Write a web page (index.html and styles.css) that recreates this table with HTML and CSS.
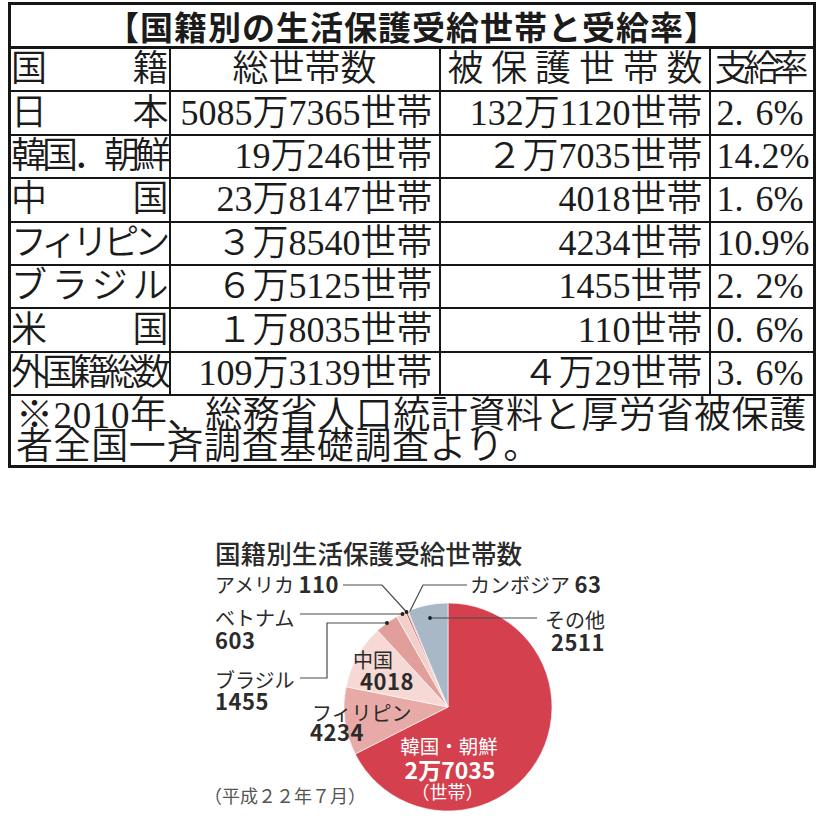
FILE: index.html
```html
<!DOCTYPE html>
<html lang="ja">
<head>
<meta charset="utf-8">
<link rel="stylesheet" href="styles.css">
</head>
<body>
<table class="stats">
  <colgroup><col class="c1"><col class="c2"><col class="c3"><col class="c4"></colgroup>
  <tr><th colspan="4" class="title">【国籍別の生活保護受給世帯と受給率】</th></tr>
  <tr class="head">
    <th class="name pair">国籍</th>
    <th class="center">総世帯数</th>
    <th class="spread">被保護世帯数</th>
    <th class="rate-h">支給率</th>
  </tr>
  <tr><td class="name pair">日本</td><td class="num">5085万7365世帯</td><td class="num">132万1120世帯</td><td class="rate">2. 6%</td></tr>
  <tr><td class="name squeeze">韓国．朝鮮</td><td class="num">19万246世帯</td><td class="num">２万7035世帯</td><td class="rate">14.2%</td></tr>
  <tr><td class="name pair">中国</td><td class="num">23万8147世帯</td><td class="num">4018世帯</td><td class="rate">1. 6%</td></tr>
  <tr><td class="name squeeze">フィリピン</td><td class="num">３万8540世帯</td><td class="num">4234世帯</td><td class="rate">10.9%</td></tr>
  <tr><td class="name pair">ブラジル</td><td class="num">６万5125世帯</td><td class="num">1455世帯</td><td class="rate">2. 2%</td></tr>
  <tr><td class="name pair">米国</td><td class="num">１万8035世帯</td><td class="num">110世帯</td><td class="rate">0. 6%</td></tr>
  <tr><td class="name squeeze">外国籍総数</td><td class="num">109万3139世帯</td><td class="num">４万29世帯</td><td class="rate">3. 6%</td></tr>
  <tr><td colspan="4" class="note">※2010年、総務省人口統計資料と厚労省被保護<br>者全国一斉調査基礎調査より。</td></tr>
</table>

<div class="chart">
  <svg class="pie" width="440" height="300" viewBox="0 0 440 300" xmlns="http://www.w3.org/2000/svg">
    <text class="ct-title" x="25" y="41">国籍別生活保護受給世帯数</text>

    <g class="slices">
      <path class="s-korea" d="M258,184 L258,80 A104,104 0 1 1 165.21,230.99 Z"/>
      <path class="s-phil" d="M258,184 L165.21,230.99 A104,104 0 0 1 155.99,163.76 Z"/>
      <path class="s-china" d="M258,184 L155.99,163.76 A104,104 0 0 1 187.54,107.51 Z"/>
      <path class="s-brazil" d="M258,184 L187.54,107.51 A104,104 0 0 1 206.69,93.54 Z"/>
      <path class="s-viet" d="M258,184 L206.69,93.54 A104,104 0 0 1 215.47,89.09 Z"/>
      <path class="s-usa" d="M258,184 L215.47,89.09 A104,104 0 0 1 217.11,88.38 Z"/>
      <path class="s-camb" d="M258,184 L217.11,88.38 A104,104 0 0 1 218.07,87.97 Z"/>
      <path class="s-other" d="M258,184 L218.07,87.97 A104,104 0 0 1 258,80 Z"/>
    </g>

    <g class="leaders">
      <polyline points="153,62 192,62 216.5,89"/>
      <polyline points="220,88 233,62 277,62"/>
      <polyline points="110,91 212.5,91"/>
      <polyline points="110,155 137,155 137,100 197,100"/>
      <polyline points="240,95 347,95"/>
    </g>
    <g class="dots">
      <circle cx="216.5" cy="89" r="1.9"/>
      <circle cx="212.5" cy="91" r="1.9"/>
      <circle cx="197" cy="100" r="1.9"/>
      <circle cx="240" cy="95" r="1.9"/>
    </g>

    <text class="lbl" x="25" y="70">アメリカ <tspan class="num-b">110</tspan></text>
    <text class="lbl" x="280" y="70">カンボジア <tspan class="num-b">63</tspan></text>
    <text class="lbl" x="25" y="103">ベトナム</text>
    <text class="num-b" x="25" y="126">603</text>
    <text class="lbl" x="25" y="165">ブラジル</text>
    <text class="num-b" x="25" y="187">1455</text>
    <text class="lbl" x="163" y="145">中国</text>
    <text class="num-b" x="170" y="167">4018</text>
    <text class="lbl" x="122" y="198">フィリピン</text>
    <text class="num-b" x="120" y="218">4234</text>
    <text class="lbl end" x="415" y="105">その他</text>
    <text class="num-b end" x="415" y="128">2511</text>
    <text class="lbl-w" x="259" y="231">韓国・朝鮮</text>
    <text class="num-w" x="260" y="256">2万7035</text>
    <text class="lbl-w small" x="257.5" y="276">（世帯）</text>
    <text class="date" x="14" y="280">（平成２２年７月）</text>
  </svg>
</div>
</body>
</html>
```

FILE: styles.css
```css
html, body {
  margin: 0;
  background: #ffffff;
}

body {
  padding: 2px 0 0 8px;
  font-family: "Liberation Serif", "Noto Sans CJK JP", serif;
  color: #1b1b1b;
}

.stats {
  border-collapse: collapse;
  table-layout: fixed;
  width: 805px;
  border: 3px solid #161616;
}

.c1 { width: 160px; }
.c2 { width: 270px; }
.c3 { width: 270px; }
.c4 { width: 105px; }

.stats td,
.stats th {
  border: 2px solid #161616;
  padding: 0;
  height: 41.4px;
  font-size: 36px;
  line-height: 39px;
  font-weight: 350;
  white-space: nowrap;
  overflow: hidden;
  vertical-align: middle;
}

.stats th.title {
  height: 41px;
  border-bottom-width: 3px;
  font-family: "Noto Sans CJK JP", sans-serif;
  font-weight: 700;
  font-size: 33px;
  line-height: 40px;
  text-align: center;
  letter-spacing: 1px;
  overflow: visible;
}

.name {
  padding: 0 2px;
  text-align: left;
}

.pair {
  text-align: justify;
  text-align-last: justify;
}

.squeeze {
  letter-spacing: -5px;
}

.center {
  text-align: center;
}

.spread {
  text-align: justify;
  text-align-last: justify;
  padding: 0 6px 0 7px !important;
}

.rate-h {
  text-align: left;
  padding-left: 4px !important;
  letter-spacing: -7px;
}

.num {
  text-align: right;
  padding-right: 6px !important;
}

.rate {
  text-align: left;
  padding-left: 6px !important;
  word-spacing: 3px;
}

.stats td.note {
  height: 65px;
  vertical-align: top;
  padding: 4px 0 0 5px;
  font-size: 37px;
  line-height: 31px;
  letter-spacing: 0.6px;
  white-space: nowrap;
}

/* chart */
.chart {
  margin: 55px 0 0 182px;
}

.pie {
  display: block;
}

.pie text {
  font-family: "Noto Sans CJK JP", "Noto Sans", sans-serif;
  fill: #2b2b2b;
}

.pie .ct-title {
  font-size: 25.6px;
  font-weight: 500;
  fill: #2a2a2a;
}

.pie .lbl {
  font-size: 20px;
  font-weight: 400;
}

.pie .num-b {
  font-size: 22px;
  font-weight: 700;
  letter-spacing: 0.5px;
}

.pie .end {
  text-anchor: end;
}

.pie .lbl-w {
  font-size: 19.5px;
  fill: #ffffff;
  text-anchor: middle;
}

.pie .num-w {
  font-size: 23px;
  font-weight: 700;
  fill: #ffffff;
  text-anchor: middle;
}

.pie .small {
  font-size: 18px;
}

.pie .date {
  font-size: 18px;
  fill: #555555;
}

.slices path {
  stroke: #ffffff;
  stroke-width: 0.6;
}

.s-korea { fill: #d4404e; }
.s-phil { fill: #e8aaa7; }
.s-china { fill: #f6d9d4; }
.s-brazil { fill: #e29e9a; }
.s-viet { fill: #f3cfca; }
.s-usa { fill: #c23644; }
.s-camb { fill: #d7737b; }
.s-other { fill: #a8b8c6; }

.leaders polyline {
  fill: none;
  stroke: #4a4a4a;
  stroke-width: 1.2;
}

.dots circle {
  fill: #1e1e1e;
}
```
